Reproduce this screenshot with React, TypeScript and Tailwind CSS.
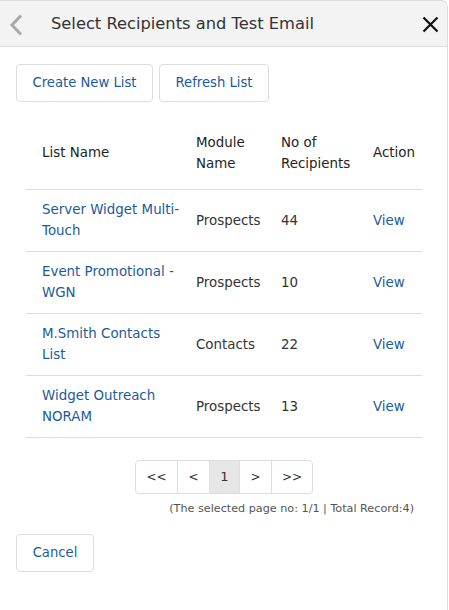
import React from "react";

const rows = [
  { name: ["Server Widget Multi-", "Touch"], module: "Prospects", count: "44" },
  { name: ["Event Promotional -", "WGN"], module: "Prospects", count: "10" },
  { name: ["M.Smith Contacts", "List"], module: "Contacts", count: "22" },
  { name: ["Widget Outreach", "NORAM"], module: "Prospects", count: "13" },
];

export default function App() {
  return (
    <div className="w-[449px] h-[610px] bg-white overflow-hidden" style={{ fontFamily: '"DejaVu Sans", "Open Sans", sans-serif' }}>
      <div className="w-[448px] h-[610px] border-t border-r border-[#dcdcdc] rounded-tr-[7px] bg-white flex flex-col">
        <div className="h-[46px] bg-[#f3f3f3] border-b border-[#dddddd] rounded-tr-[7px] flex items-center shrink-0">
          <div className="w-[51px] flex items-center pl-[9px] pt-[2px]">
            <svg width="14" height="22" viewBox="0 0 14 22">
              <polyline points="12,1.5 3,11 12,20.5" fill="none" stroke="#aaaaaa" strokeWidth="3" />
            </svg>
          </div>
          <div className="flex-1 pt-[2px] text-[16.3px] text-[#333333]">Select Recipients and Test Email</div>
          <div className="pr-[8px] pt-[1px]">
            <svg width="17" height="17" viewBox="0 0 17 17">
              <path d="M1.5 1.5 L15.5 15.5 M15.5 1.5 L1.5 15.5" stroke="#111111" strokeWidth="2.2" />
            </svg>
          </div>
        </div>

        <div className="flex gap-[6px] pl-[16px] pt-[17px]">
          <button className="h-[38px] w-[137px] border border-[#dddddd] rounded-[4px] text-[13.2px] text-[#1c5a9e] bg-white">Create New List</button>
          <button className="h-[38px] w-[110px] border border-[#dddddd] rounded-[4px] text-[13.2px] text-[#1c5a9e] bg-white">Refresh List</button>
        </div>

        <div className="pl-[26px] pt-[20px]">
          <table className="w-[396px] border-collapse table-fixed text-[13.4px] leading-[21px]">
            <colgroup>
              <col className="w-[154px]" />
              <col className="w-[85px]" />
              <col className="w-[92px]" />
              <col className="w-[65px]" />
            </colgroup>
            <thead>
              <tr className="h-[67px] border-b border-[#dddddd] text-[#222222]">
                <th className="font-normal text-left pl-[16px] pb-[5px] align-middle">List Name</th>
                <th className="font-normal text-left pl-[16px] pb-[5px] align-middle whitespace-nowrap">Module<br />Name</th>
                <th className="font-normal text-left pl-[16px] pb-[5px] align-middle whitespace-nowrap">No of<br />Recipients</th>
                <th className="font-normal text-left pl-[16px] pb-[5px] align-middle">Action</th>
              </tr>
            </thead>
            <tbody>
              {rows.map((r, i) => (
                <tr key={i} className="h-[62px] border-b border-[#dddddd]">
                  <td className="pl-[16px] align-middle text-[#1c5a9e] whitespace-nowrap">
                    {r.name[0]}
                    <br />
                    {r.name[1]}
                  </td>
                  <td className="pl-[16px] align-middle text-[#333333]">{r.module}</td>
                  <td className="pl-[16px] align-middle text-[#333333]">{r.count}</td>
                  <td className="pl-[16px] align-middle text-[#1c5a9e]">View</td>
                </tr>
              ))}
            </tbody>
          </table>
        </div>

        <div className="pl-[135px] pt-[22px]">
          <div className="inline-flex h-[34px] border border-[#dddddd] rounded-[4px] text-[12px] text-[#333333] overflow-hidden">
            <div className="w-[41px] flex items-center justify-center">&lt;&lt;</div>
            <div className="w-[32px] flex items-center justify-center border-l border-[#dddddd]">&lt;</div>
            <div className="w-[30px] flex items-center justify-center border-l border-[#dddddd] bg-[#e6e6e6] text-[13px]">1</div>
            <div className="w-[32px] flex items-center justify-center border-l border-[#dddddd]">&gt;</div>
            <div className="w-[41px] flex items-center justify-center border-l border-[#dddddd]">&gt;&gt;</div>
          </div>
        </div>
        <div className="pr-[33px] pt-[7px] text-right text-[11.2px] leading-[16px] text-[#555555]">(The selected page no: 1/1 | Total Record:4)</div>

        <div className="pl-[16px] pt-[17px]">
          <button className="h-[38px] w-[78px] border border-[#dddddd] rounded-[4px] text-[13.2px] text-[#1c5a9e] bg-white">Cancel</button>
        </div>
      </div>
    </div>
  );
}
